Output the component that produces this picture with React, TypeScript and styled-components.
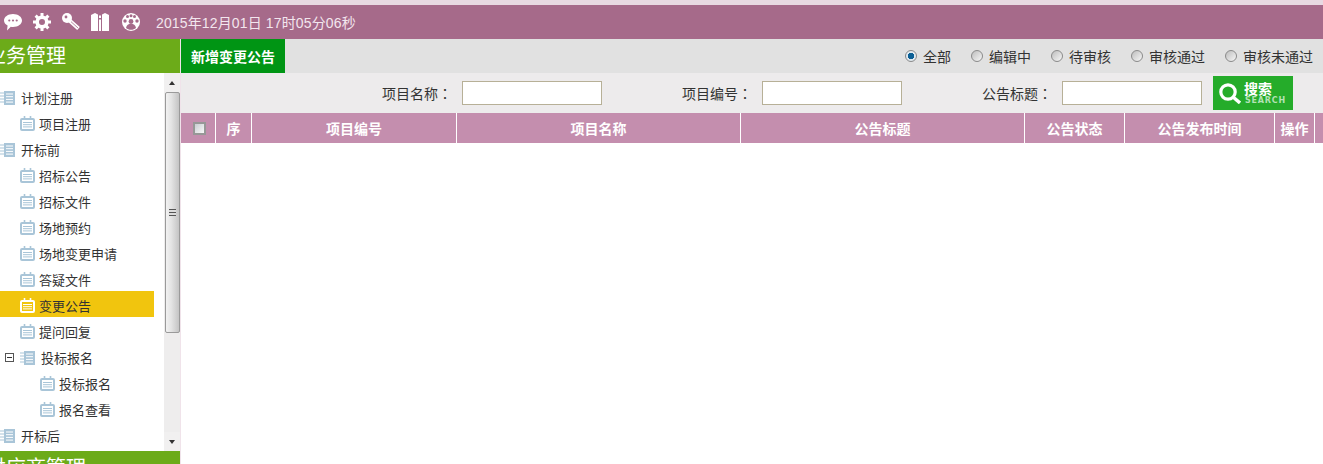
import React from 'react'
import styled, { createGlobalStyle } from 'styled-components'

const GlobalStyle = createGlobalStyle`
  html, body {
    margin: 0;
    padding: 0;
    background: #fff;
    overflow: hidden;
  }
  body {
    font-family: "Liberation Sans", "Noto Sans CJK SC", sans-serif;
    font-size: 13px;
    color: #333;
  }
`

const Page = styled.div`
  width: 1323px;
  height: 464px;
  display: flex;
  flex-direction: column;
  overflow: hidden;
`

const TopStrip = styled.div`
  height: 5px;
  background: #e8d9e2;
  flex: none;
`

const Header = styled.header`
  height: 34px;
  flex: none;
  background: #a66a8a;
  display: flex;
  align-items: center;
  padding-left: 4px;
  color: #f3e6ee;
`

const IconButton = styled.span<{ $gap?: number }>`
  width: 18px;
  height: 20px;
  margin-right: ${p => p.$gap ?? 11}px;
  display: flex;
  align-items: center;
  justify-content: center;
`

const Clock = styled.span`
  margin-left: 5px;
  font-size: 14px;
  letter-spacing: 0.14px;
`

const Body = styled.div`
  flex: 1;
  display: flex;
  min-height: 0;
`

const Sidebar = styled.aside`
  width: 180px;
  flex: none;
  display: flex;
  flex-direction: column;
  overflow: hidden;
`

const SideTitle = styled.div`
  height: 34px;
  flex: none;
  background: #6cab19;
  color: #fff;
  font-size: 20px;
  line-height: 34px;
  white-space: nowrap;
  text-indent: -14px;
`

const TreeArea = styled.div`
  height: 378px;
  flex: none;
  display: flex;
`

const Tree = styled.div`
  width: 164px;
  flex: none;
  padding-top: 10px;
  overflow: hidden;
`

const Row = styled.div<{ $indent: number; $active?: boolean }>`
  height: 26px;
  width: 154px;
  box-sizing: border-box;
  display: flex;
  align-items: center;
  padding-top: 3px;
  padding-left: ${p => p.$indent}px;
  background: ${p => (p.$active ? '#f1c50e' : 'transparent')};
  font-size: 13px;
  color: #333;
  white-space: nowrap;
`

const ExpandBox = styled.span`
  width: 9px;
  height: 9px;
  box-sizing: border-box;
  border: 1px solid #555;
  margin-right: 6px;
  flex: none;
  display: flex;
  align-items: center;
  justify-content: center;
  &::after {
    content: '';
    width: 5px;
    height: 1px;
    background: #333;
  }
`

const BranchSvg = styled.svg`
  width: 16px;
  height: 16px;
  flex: none;
  margin-right: 5px;
`

const LeafSvg = styled.svg`
  width: 15px;
  height: 15px;
  flex: none;
  margin-right: 4px;
`

const Scrollbar = styled.div`
  width: 16px;
  flex: none;
  background: #eeeded;
  display: flex;
  flex-direction: column;
  align-items: center;
`

const ScrollArrow = styled.div<{ $up?: boolean }>`
  height: 19px;
  width: 100%;
  flex: none;
  background: #f1f0f0;
  display: flex;
  align-items: center;
  justify-content: center;
  &::after {
    content: '';
    border-left: 3.5px solid transparent;
    border-right: 3.5px solid transparent;
    ${p => (p.$up ? 'border-bottom: 4px solid #333;' : 'border-top: 4px solid #333;')}
  }
`

const ScrollThumb = styled.div`
  width: 15px;
  height: 241px;
  box-sizing: border-box;
  border: 1px solid #9a9a9a;
  border-radius: 2px;
  background: linear-gradient(90deg, #f2f2f2 0%, #e4e4e4 40%, #c4c4c4 100%);
  display: flex;
  align-items: center;
  justify-content: center;
`

const Grip = styled.div`
  width: 7px;
  height: 7px;
  background: repeating-linear-gradient(180deg, #555 0 1px, #ddd 1px 3px);
`

const Main = styled.main`
  flex: 1;
  min-width: 0;
  display: flex;
  flex-direction: column;
  border-left: 1px solid #f0e3ea;
`

const Toolbar = styled.div`
  height: 34px;
  flex: none;
  background: #e1e1e1;
  display: flex;
  align-items: center;
  justify-content: space-between;
`

const AddButton = styled.button`
  height: 34px;
  width: 104px;
  border: 0;
  padding: 0;
  background: #009514;
  color: #fff;
  font-family: inherit;
  font-size: 14px;
  font-weight: 700;
`

const RadioGroup = styled.div`
  display: flex;
  align-items: center;
  padding-right: 10px;
  gap: 20px;
`

const RadioItem = styled.label`
  display: flex;
  align-items: center;
  font-size: 14px;
  color: #333;
`

const RadioDot = styled.span<{ $on?: boolean }>`
  width: 12px;
  height: 12px;
  box-sizing: border-box;
  border-radius: 50%;
  border: 1px solid #8a8a8a;
  margin-right: 6px;
  background: ${p =>
    p.$on
      ? 'radial-gradient(circle, #0b5f95 0 3px, #dfe8ee 3.5px)'
      : 'linear-gradient(135deg, #bdbdbd, #f7f7f7)'};
`

const SearchBar = styled.div`
  height: 40px;
  flex: none;
  background: #edebec;
  display: flex;
  align-items: center;
`

const Field = styled.label<{ $width: number }>`
  width: ${p => p.$width}px;
  flex: none;
  display: flex;
  align-items: center;
  justify-content: flex-end;
  font-size: 14px;
  color: #333;
`

const Colon = styled.span`
  font-family: "Noto Sans CJK TC", sans-serif;
`

const FieldInput = styled.input`
  width: 140px;
  height: 24px;
  box-sizing: border-box;
  border: 1px solid #b7b097;
  background: #fff;
  margin-left: 10px;
  padding: 0;
`

const SearchButton = styled.button`
  width: 80px;
  height: 34px;
  margin-left: 11px;
  border: 0;
  padding: 0 0 0 6px;
  background: #25ac2a;
  color: #fff;
  display: flex;
  align-items: center;
  font-family: inherit;
`

const SearchText = styled.span`
  display: flex;
  flex-direction: column;
  margin-left: 3px;
  text-align: left;
  font-size: 14px;
  font-weight: 700;
  line-height: 15px;
`

const SearchSub = styled.span`
  font-family: "DejaVu Sans", sans-serif;
  font-size: 8px;
  font-weight: 700;
  line-height: 8px;
  letter-spacing: 0.8px;
  color: #b3e2b5;
  margin-left: 1px;
`

const Table = styled.div`
  height: 30px;
  flex: none;
  background: #c48eae;
  display: flex;
`

const HeadCell = styled.div<{ $width: number }>`
  width: ${p => p.$width}px;
  flex: none;
  box-sizing: border-box;
  border-right: 1px solid #fff;
  display: flex;
  align-items: center;
  justify-content: center;
  color: #fff;
  font-size: 14px;
  font-weight: 700;
`

const HeadCheck = styled.span`
  width: 13px;
  height: 13px;
  margin-left: 3px;
  box-sizing: border-box;
  border: 2px solid #979797;
  background: linear-gradient(135deg, #c9cdd2, #f8f8f8);
`

const Filler = styled.div`
  flex: 1;
  background: #fff;
`

const BranchIcon = () => (
  <BranchSvg viewBox="0 0 16 16">
    <path d="M4 1h11v14H4z" fill="#a9c5d8" />
    <path d="M6 4h7M6 6.700h7M6 9.400h7M6 12.100h7" stroke="#fff" strokeWidth="1" />
    <path d="M0 3h4M0 6h4M0 9h4M0 12h4" stroke="#a9c5d8" strokeWidth="1.200" />
  </BranchSvg>
)

const LeafIcon = ({ active }: { active?: boolean }) => {
  const c = active ? '#fff' : '#a9c5d8'
  return (
    <LeafSvg viewBox="0 0 15 15">
      <rect x="1" y="3" width="13" height="11" rx="1" fill="none" stroke={c} strokeWidth="2" />
      <path d="M4.500 0v4M10.500 0v4" stroke={c} strokeWidth="1.600" />
      <path d="M3 6.500h9M3 8.700h9M3 10.900h9" stroke={c} strokeWidth="1" />
    </LeafSvg>
  )
}

const ChatIcon = () => (
  <svg width="18" height="17" viewBox="0 0 18 17">
    <path d="M9 0c5 0 9 2.900 9 6.500S14 13 9 13c-.8 0-1.500-.1-2.200-.2L3 16.500l.6-4.900C1.400 10.400 0 8.600 0 6.500 0 2.900 4 0 9 0z" fill="#fff" />
    <circle cx="5.300" cy="6.500" r="1.100" fill="#a66a8a" />
    <circle cx="9" cy="6.500" r="1.100" fill="#a66a8a" />
    <circle cx="12.700" cy="6.500" r="1.100" fill="#a66a8a" />
  </svg>
)

const GearIcon = () => (
  <svg width="18" height="18" viewBox="0 0 18 18">
    <circle cx="9" cy="9" r="4.800" fill="none" stroke="#fff" strokeWidth="3.600" />
    <path
      d="M9 0v4M9 14v4M0 9h4M14 9h4M2.600 2.600l2.800 2.800M12.600 12.600l2.800 2.800M2.600 15.400l2.800-2.800M12.600 5.400l2.800-2.800"
      stroke="#fff"
      strokeWidth="3"
    />
  </svg>
)

const KeyIcon = () => (
  <svg width="18" height="18" viewBox="0 0 18 18">
    <circle cx="5" cy="5" r="5" fill="#fff" />
    <circle cx="4" cy="4" r="1.400" fill="#a66a8a" />
    <path d="M7.500 7.500l9 8" stroke="#fff" strokeWidth="4" />
    <path d="M9 8.700l7 6.300" stroke="#b98aa3" strokeWidth="1" />
  </svg>
)

const ShirtIcon = () => (
  <svg width="18" height="18" viewBox="0 0 18 18">
    <path d="M0 2L4 0l3 1.500V18H0zM18 2l-4-2-3 1.500V18h7z" fill="#fff" />
    <path d="M8 2.500h2v2.500H8zM8 6.500h2V18H8z" fill="#fff" />
  </svg>
)

const GroupIcon = () => (
  <svg width="18" height="18" viewBox="0 0 18 18">
    <circle cx="9" cy="9" r="9" fill="#fff" />
    <circle cx="5.500" cy="3.600" r="1.500" fill="#a66a8a" />
    <circle cx="9" cy="2.800" r="1.500" fill="#a66a8a" />
    <circle cx="12.500" cy="3.600" r="1.500" fill="#a66a8a" />
    <circle cx="3" cy="8" r="1.700" fill="#a66a8a" />
    <circle cx="15" cy="8" r="1.700" fill="#a66a8a" />
    <circle cx="9" cy="8.500" r="2.400" fill="#a66a8a" />
    <path d="M4 15c.5-2.800 2.500-4.200 5-4.200s4.500 1.400 5 4.200c-1.400 1.200-3 1.800-5 1.800s-3.600-.6-5-1.800z" fill="#a66a8a" />
  </svg>
)

const SearchGlyph = () => (
  <svg width="22" height="21" viewBox="0 0 22 21">
    <circle cx="9" cy="9" r="7.200" fill="none" stroke="#fff" strokeWidth="3.200" />
    <path d="M14 14l7 6" stroke="#fff" strokeWidth="3.400" />
  </svg>
)

type TreeRow = { label: string; indent: number; branch?: boolean; active?: boolean; box?: boolean }

const rows: TreeRow[] = [
  { label: '计划注册', indent: 0, branch: true },
  { label: '项目注册', indent: 20 },
  { label: '开标前', indent: 0, branch: true },
  { label: '招标公告', indent: 20 },
  { label: '招标文件', indent: 20 },
  { label: '场地预约', indent: 20 },
  { label: '场地变更申请', indent: 20 },
  { label: '答疑文件', indent: 20 },
  { label: '变更公告', indent: 20, active: true },
  { label: '提问回复', indent: 20 },
  { label: '投标报名', indent: 5, branch: true, box: true },
  { label: '投标报名', indent: 40 },
  { label: '报名查看', indent: 40 },
  { label: '开标后', indent: 0, branch: true },
]

const statuses = ['全部', '编辑中', '待审核', '审核通过', '审核未通过']

const columns = [
  { label: '序', width: 36 },
  { label: '项目编号', width: 205 },
  { label: '项目名称', width: 284 },
  { label: '公告标题', width: 284 },
  { label: '公告状态', width: 100 },
  { label: '公告发布时间', width: 150 },
  { label: '操作', width: 40 },
]

export default function App() {
  return (
    <Page>
      <GlobalStyle />
      <TopStrip />
      <Header>
        <IconButton><ChatIcon /></IconButton>
        <IconButton><GearIcon /></IconButton>
        <IconButton><KeyIcon /></IconButton>
        <IconButton $gap={13}><ShirtIcon /></IconButton>
        <IconButton><GroupIcon /></IconButton>
        <Clock>2015年12月01日 17时05分06秒</Clock>
      </Header>
      <Body>
        <Sidebar>
          <SideTitle>业务管理</SideTitle>
          <TreeArea>
            <Tree>
              {rows.map((row, i) => (
                <Row key={i} $indent={row.indent} $active={row.active}>
                  {row.box && <ExpandBox />}
                  {row.branch ? <BranchIcon /> : <LeafIcon active={row.active} />}
                  {row.label}
                </Row>
              ))}
            </Tree>
            <Scrollbar>
              <ScrollArrow $up />
              <ScrollThumb><Grip /></ScrollThumb>
              <Filler />
              <ScrollArrow />
            </Scrollbar>
          </TreeArea>
          <SideTitle>供应商管理</SideTitle>
        </Sidebar>
        <Main>
          <Toolbar>
            <AddButton>新增变更公告</AddButton>
            <RadioGroup>
              {statuses.map((s, i) => (
                <RadioItem key={s}>
                  <RadioDot $on={i === 0} />
                  {s}
                </RadioItem>
              ))}
            </RadioGroup>
          </Toolbar>
          <SearchBar>
            <Field $width={421}>项目名称<Colon>：</Colon><FieldInput /></Field>
            <Field $width={300}>项目编号<Colon>：</Colon><FieldInput /></Field>
            <Field $width={300}>公告标题<Colon>：</Colon><FieldInput /></Field>
            <SearchButton>
              <SearchGlyph />
              <SearchText>
                搜索
                <SearchSub>SEARCH</SearchSub>
              </SearchText>
            </SearchButton>
          </SearchBar>
          <Table>
            <HeadCell $width={35}><HeadCheck /></HeadCell>
            {columns.map(c => (
              <HeadCell key={c.label} $width={c.width}>{c.label}</HeadCell>
            ))}
          </Table>
          <Filler />
        </Main>
      </Body>
    </Page>
  )
}
